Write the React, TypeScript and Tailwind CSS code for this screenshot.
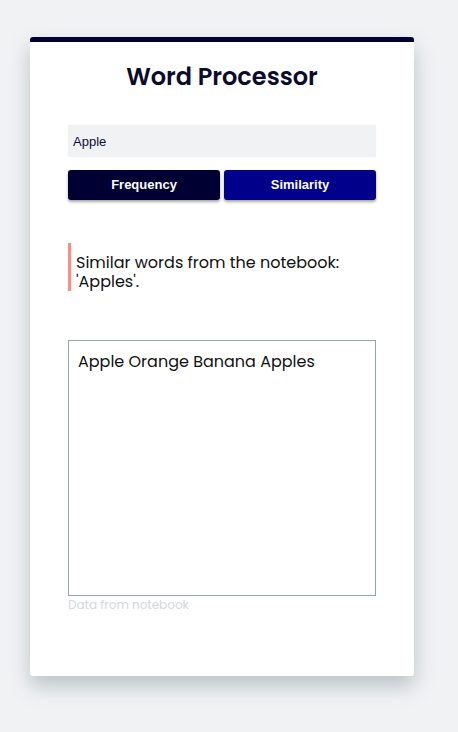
import { useState } from 'react';

export default function App() {
  const [word, setWord] = useState('Apple');

  return (
    <div className="min-h-screen bg-[#f1f2f4] pt-[37px] pl-[30px] font-['Poppins','Inter',sans-serif]">
      <div className="w-[384px] h-[639px] bg-white rounded-[3px] border-t-[5px] border-[#000033] shadow-[0_10px_20px_rgba(120,140,145,0.45)] px-[38px] pt-[17px]">
        <h1 className="text-center text-[24px] font-semibold text-[#0b0b2e] leading-[35px]">
          Word Processor
        </h1>

        {/* word input */}
        <input
          value={word}
          onChange={(e) => setWord(e.target.value)}
          className="mt-[31px] w-full h-[32px] rounded-[3px] bg-[#f1f2f4] px-[5px] text-[13px] text-[#0b0b40] font-['Liberation_Sans',Arial,sans-serif] outline-none shadow-[0_0_1px_rgba(0,0,0,0.15)]"
        />

        <div className="mt-[13px] flex gap-[4px]">
          <button className="flex-1 h-[30px] rounded-[3px] bg-[#000033] text-white text-[13px] font-bold font-['Liberation_Sans',Arial,sans-serif] shadow-[0_2px_3px_rgba(0,0,0,0.35)]">
            Frequency
          </button>
          <button className="flex-1 h-[30px] rounded-[3px] bg-[#00008b] text-white text-[13px] font-bold font-['Liberation_Sans',Arial,sans-serif] shadow-[0_2px_3px_rgba(0,0,0,0.35)]">
            Similarity
          </button>
        </div>

        {/* result message */}
        <div className="mt-[43px] border-l-[3px] border-[#ff8a80] pl-[5px] pt-[10px] text-[16px] leading-[19px] text-[#111]">
          Similar words from the notebook: 'Apples'.
        </div>

        {/* notebook data */}
        <div className="mt-[49px] h-[256px] border border-[#94a5a8] px-[9px] py-[9px] text-[16px] leading-[24px] text-[#111]">
          Apple Orange Banana Apples
        </div>
        <div className="mt-[1px] text-[12px] leading-[16px] text-[#d2d8db]">Data from notebook</div>
      </div>
    </div>
  );
}
